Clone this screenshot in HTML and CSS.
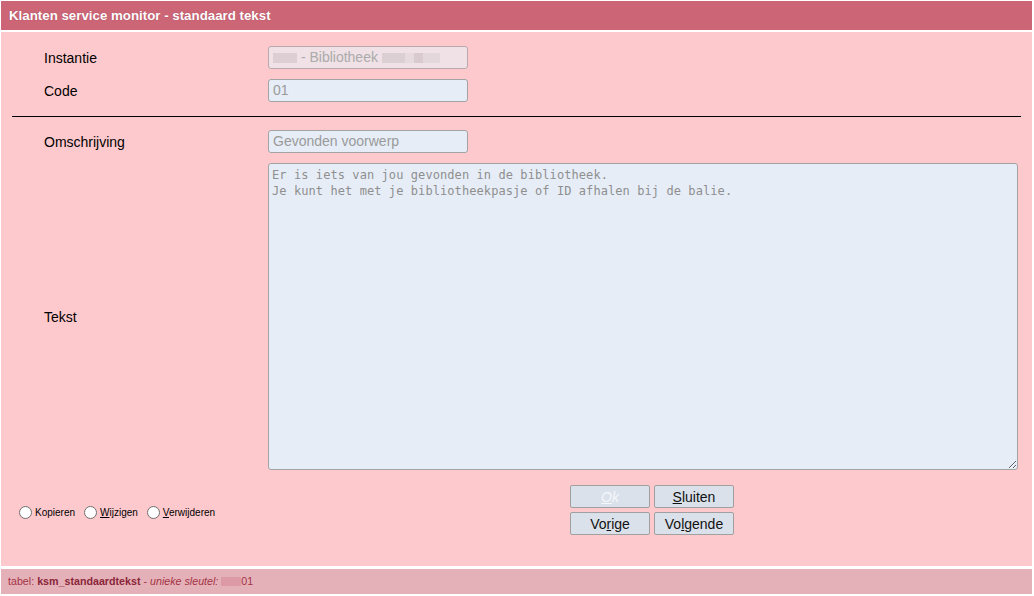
FILE: index.html
```html
<!DOCTYPE html>
<html lang="nl">
<head>
<meta charset="utf-8">
<title>Klanten service monitor - standaard tekst</title>
<link rel="stylesheet" href="styles.css">
</head>
<body>
<div class="window">
  <div class="titlebar">Klanten service monitor - standaard tekst</div>
  <form class="panel">
    <div class="fields">
      <label class="lbl">Instantie</label>
      <div class="input disabled"><span class="blur b1"></span> - Bibliotheek <span class="blur b2"></span></div>
      <label class="lbl">Code</label>
      <div class="input">01</div>
    </div>
    <hr class="sep">
    <div class="fields">
      <label class="lbl">Omschrijving</label>
      <div class="input">Gevonden voorwerp</div>
      <label class="lbl lbl-mid">Tekst</label>
      <textarea class="text">Er is iets van jou gevonden in de bibliotheek.
Je kunt het met je bibliotheekpasje of ID afhalen bij de balie.</textarea>
    </div>
    <div class="actions">
      <div class="radios">
        <label class="radio"><span class="circle"></span><span>Kopieren</span></label>
        <label class="radio"><span class="circle"></span><span><u>W</u>ijzigen</span></label>
        <label class="radio"><span class="circle"></span><span><u>V</u>erwijderen</span></label>
      </div>
      <div class="buttons">
        <button type="button" class="btn btn-off"><u>O</u>k</button>
        <button type="button" class="btn"><u>S</u>luiten</button>
        <button type="button" class="btn">Vo<u>r</u>ige</button>
        <button type="button" class="btn">Vo<u>l</u>gende</button>
      </div>
    </div>
  </form>
  <div class="footer">tabel: <b>ksm_standaardtekst</b> - <i>unieke sleutel:</i> <span class="blur b3"></span>01</div>
</div>
</body>
</html>
```
FILE: styles.css
```css
html, body {
  margin: 0;
  background: #ffffff;
}
body {
  font-family: "Liberation Sans", Arial, sans-serif;
  font-size: 14px;
  color: #000;
}
.window {
  margin: 1px 2px 0 1px;
  display: flex;
  flex-direction: column;
}
.titlebar {
  height: 29px;
  box-sizing: border-box;
  padding: 7px 0 0 8px;
  background: #cc6677;
  color: #ffffff;
  font-weight: bold;
  font-size: 13.3px;
  text-shadow: 0 0 1px rgba(120, 30, 50, 0.5);
}
.panel {
  margin: 2px 0 0 0;
  height: 534px;
  box-sizing: border-box;
  background: #fec9cc;
  padding-top: 14px;
}
.fields {
  display: grid;
  grid-template-columns: 224px 1fr;
  row-gap: 10px;
  padding: 0 14px 0 43px;
  align-items: center;
}
.lbl {
  font-size: 14px;
  line-height: 16px;
}
.input {
  width: 200px;
  height: 23px;
  box-sizing: border-box;
  border: 1px solid #a3a3a3;
  border-radius: 3px;
  background: #e6edf7;
  color: #9a9a9a;
  font-size: 14px;
  padding: 2px 4px;
  line-height: 17px;
  white-space: nowrap;
}
.input.disabled {
  background: #efe1e5;
  color: #ababab;
  border-color: #b9a9ad;
}
.blur {
  display: inline-block;
  height: 10px;
  vertical-align: -1px;
  background: #dcced3;
}
.b1 { width: 24px; }
.b2 { width: 58px; background: linear-gradient(90deg, #dccfd3 0 40%, #e7dade 40% 55%, #d8cace 55% 70%, #e4d7db 70% 100%); }
.b3 { width: 20px; background: #dc9aa6; height: 9px; }
.sep {
  margin: 14px 11px 13px 11px;
  border: 0;
  border-top: 1px solid #000;
  height: 0;
}
.text {
  width: 100%;
  height: 307px;
  box-sizing: border-box;
  margin: 0;
  border: 1px solid #a3a3a3;
  border-radius: 3px;
  background: #e6edf7;
  color: #8f8f8f;
  font-family: "DejaVu Sans Mono", "Liberation Mono", monospace;
  font-size: 12px;
  letter-spacing: 0.08px;
  line-height: 16px;
  padding: 3px 3px;
  resize: both;
}
.lbl-mid {
  align-self: center;
}
.actions {
  display: grid;
  grid-template-columns: 551px auto;
  align-items: center;
  padding: 15px 0 0 18px;
}
.radios {
  display: flex;
  gap: 9px;
  font-size: 10px;
  padding-top: 5px;
}
.radio {
  display: flex;
  align-items: center;
  gap: 3px;
}
.circle {
  width: 11px;
  height: 11px;
  border: 1px solid #707070;
  border-radius: 50%;
  background: #fff;
}
.buttons {
  display: grid;
  grid-template-columns: 80px 80px;
  column-gap: 4px;
  row-gap: 4px;
}
.btn {
  width: 80px;
  height: 23px;
  box-sizing: border-box;
  border: 1px solid #a0a0a0;
  border-radius: 2px;
  background: #dae1ea;
  font-family: "Liberation Sans", Arial, sans-serif;
  font-size: 14px;
  color: #111;
  padding: 0;
}
.btn-off {
  color: #f5f7fb;
  font-style: italic;
}
.footer {
  margin-top: 3px;
  height: 25px;
  box-sizing: border-box;
  background: #e5b1b8;
  color: #a33345;
  font-size: 10.7px;
  padding: 6px 0 0 7px;
}
.footer b {
  color: #8a2638;
}
```
